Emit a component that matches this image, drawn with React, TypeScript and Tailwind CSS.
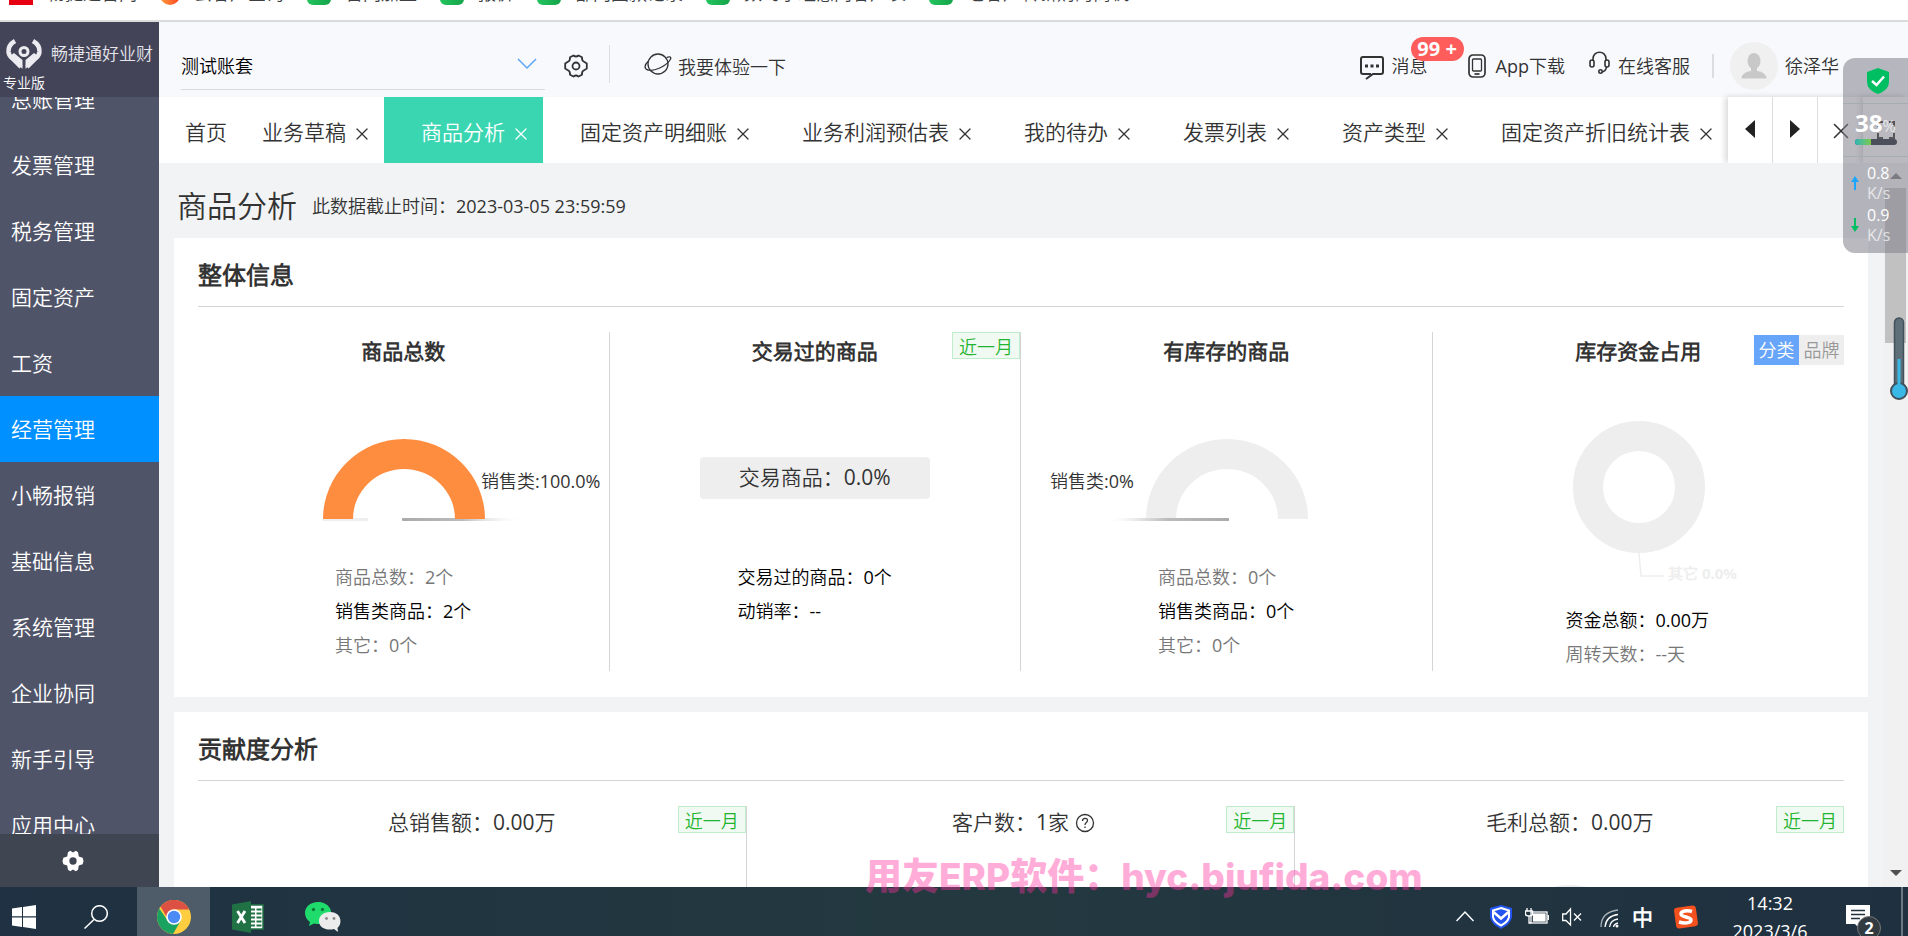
import React from 'react';
import { X } from 'lucide-react';

const bookmarks = [
  { label: '畅捷通官网', kind: 'red' },
  { label: '云客户查询', kind: 'orange' },
  { label: '官网加盟', kind: 'green' },
  { label: '报价', kind: 'green' },
  { label: '部门回款记录', kind: 'green' },
  { label: '数约小组意向客户表', kind: 'green' },
  { label: '老客户转新购的商机', kind: 'green' },
];

const bookmarkStyles: Record<string, string> = {
  red: 'w-6 bg-[#e60012]',
  orange: 'w-5 rounded-full bg-gradient-to-r from-[#ff9a3c] to-[#ff3b20]',
  green: 'w-6 rounded-md bg-gradient-to-r from-[#22c55e] to-[#16a34a]',
};

const menuItems = [
  '总账管理', '发票管理', '税务管理', '固定资产', '工资', '经营管理',
  '小畅报销', '基础信息', '系统管理', '企业协同', '新手引导', '应用中心',
];

const tabs = [
  '商品分析', '固定资产明细账', '业务利润预估表', '我的待办',
  '发票列表', '资产类型', '固定资产折旧统计表',
];

const GEAR_PATH =
  'M9.500 1.500 Q12 3.500 14.500 1.500 L18 3.300 Q17.600 7 20.500 8 L22.800 9.500 V14.500 L20.500 16 Q17.600 17 18 20.700 L14.500 22.500 Q12 20.500 9.500 22.500 L6 20.700 Q6.400 17 3.500 16 L1.200 14.500 V9.500 L3.500 8 Q6.400 7 6 3.300 Z';

// Six separate teeth, used for the solid gear
const SOLID_GEAR_PATH =
  'M6.500 2.500 L9 0.800 L12 2.600 L15 0.800 L17.500 2.500 L18.300 7 L22.500 8.500 L23.500 12 L22.500 15.500 L18.300 17 L17.500 21.500 L15 23.200 L12 21.400 L9 23.200 L6.500 21.500 L5.700 17 L1.500 15.500 L0.500 12 L1.500 8.500 L5.700 7 Z';

const BookmarkBar: React.FC = () => (
  <div className="flex h-[22px] shrink-0 items-end gap-[23px] overflow-hidden whitespace-nowrap border-b-2 border-[#dadcdc] bg-white pb-[15px] pl-[9px] text-lg leading-6 text-[#3c4043]">
    {bookmarks.map((b) => (
      <a key={b.label} href="#" className="flex h-6 shrink-0 items-center gap-[14px]">
        <span className={`h-6 shrink-0 ${bookmarkStyles[b.kind]}`} />
        {b.label}
      </a>
    ))}
  </div>
);

const Sidebar: React.FC = () => (
  <aside className="flex w-[159px] shrink-0 flex-col bg-[#505469] text-white">
    <div className="flex h-[75px] shrink-0 flex-col bg-[#444459] pt-[14px]">
      <div className="flex h-9 items-center gap-2 pl-[5px]">
        <svg width="38" height="30" viewBox="0 0 38 30" fill="none" stroke="#ececf0" className="shrink-0">
          <path d="M10 2 Q3 6 3.500 13 Q4 17 8 20 L16 28" strokeWidth="4.500" />
          <path d="M28 2 Q35 6 34.500 13 Q34 17 30 20 L22 28" strokeWidth="4.500" />
          <path d="M5 17 L17.500 30 V21 L9 14Z M33 17 L20.500 30 V21 L29 14Z" fill="#ececf0" stroke="none" />
          <circle cx="19" cy="12.500" r="4" strokeWidth="3" />
        </svg>
        <span className="whitespace-nowrap text-[17px] font-medium text-[#e4e4ea]">畅捷通好业财</span>
      </div>
      <span className="pl-[3px] text-sm leading-[22px]">专业版</span>
    </div>
    <nav className="min-h-0 flex-1 overflow-hidden">
      <div className="-mt-[31px]">
        {menuItems.map((item) => (
          <a
            key={item}
            href="#"
            className={`flex h-[66px] items-center pl-[11px] pt-px text-[21px] ${item === '经营管理' ? 'bg-[#0090ff]' : ''}`}
          >
            {item}
          </a>
        ))}
      </div>
    </nav>
    <button aria-label="设置" className="flex h-[53px] shrink-0 items-center justify-center bg-[#404552] pr-[14px]">
      <svg width="22" height="22" viewBox="0 0 24 24">
        <path d={SOLID_GEAR_PATH} fill="white" />
        <circle cx="12" cy="12" r="4" fill="#404552" />
      </svg>
    </button>
  </aside>
);

const Header: React.FC = () => (
  <header className="flex h-[75px] shrink-0 items-center bg-[#f8f9fd] pl-[22px] pr-[69px] text-lg text-[#333]">
    <div className="relative mt-3 flex h-12 w-[364px] items-center border-b border-[#d9dadd]">
      <select aria-label="账套" className="h-full w-full appearance-none bg-transparent pt-[2px] text-black outline-none">
        <option>测试账套</option>
      </select>
      <svg width="20" height="12" viewBox="0 0 20 12" className="pointer-events-none absolute right-2 top-4">
        <path d="M1 1 L10 10 L19 1" fill="none" stroke="#5fa3f5" strokeWidth="1.500" />
      </svg>
    </div>
    <button aria-label="账套设置" className="ml-[18px] mt-[12px]">
      <svg width="26" height="26" viewBox="-1 -1 26 26" fill="none" stroke="#333" strokeWidth="1.800" strokeLinejoin="round">
        <path d={GEAR_PATH} />
        <circle cx="12" cy="12" r="3.500" />
      </svg>
    </button>
    <span className="ml-5 mt-2 h-[38px] w-px bg-[#dcdde1]" />
    <a href="#" className="ml-[34px] mt-[14px] flex items-center gap-[6px]">
      <svg width="28" height="24" viewBox="0 0 28 24" fill="none" stroke="#333" strokeWidth="1.300" className="-mt-[6px]">
        <circle cx="14" cy="12" r="10" />
        <path d="M4.500 9 C0 13 0 17 4 18 C10 20 22 14 26 8 C28 5 26 4 22.500 5.500" />
      </svg>
      我要体验一下
    </a>
    <div className="ml-auto mt-[12px] flex items-center">
      <a href="#" className="relative flex items-center gap-2">
        <svg width="24" height="26" viewBox="0 0 24 26" fill="none" stroke="#333" strokeWidth="2" className="mt-1">
          <path d="M11 19 H3 Q1 19 1 17 V4 Q1 2 3 2 H21 Q23 2 23 4 V17 Q23 19 21 19 H13 L6 24" />
          <path d="M5 11 h3 M10.500 11 h3 M16 11 h3" strokeWidth="3" />
        </svg>
        消息
        <span className="absolute -top-[14px] left-[51px] flex h-6 w-[53px] items-center justify-center rounded-full bg-[#ff5c5c] text-xl font-bold text-white">
          99 +
        </span>
      </a>
      <a href="#" className="ml-10 flex items-center gap-[10px]">
        <svg width="18" height="24" viewBox="0 0 18 24" fill="none" stroke="#333" strokeWidth="1.700">
          <rect x="1" y="1" width="16" height="22" rx="4" />
          <rect x="4.500" y="5" width="9" height="12" rx="1" strokeWidth="1.300" />
          <path d="M6.500 20 h5" />
        </svg>
        App下载
      </a>
      <a href="#" className="ml-6 flex items-center gap-2">
        <svg width="21" height="24" viewBox="0 0 21 24" fill="none" stroke="#333" strokeWidth="1.600" className="-mt-[5px]">
          <path d="M4 10 V8 C4 -1 17 -1 17 8 V10" />
          <rect x="1" y="9" width="4" height="7" rx="2" />
          <rect x="16" y="9" width="4" height="7" rx="2" />
          <path d="M17.500 16 Q17 20 13 21" />
          <circle cx="11.500" cy="20.500" r="1.700" />
        </svg>
        在线客服
      </a>
      <span className="ml-[22px] h-6 w-[2px] bg-[#dcdde1]" />
      <span className="ml-4 flex size-12 items-center justify-center rounded-full bg-[#f0f0f0]">
        <svg width="26" height="26" viewBox="0 0 26 26" fill="#c8c8c8">
          <ellipse cx="13" cy="8" rx="6.500" ry="8" />
          <path d="M10 14 h6 v4 q9 1 9.500 7.500 h-25 Q1 19 10 18Z" />
        </svg>
      </span>
      <span className="ml-[7px]">徐泽华</span>
    </div>
  </header>
);

const TabBar: React.FC = () => (
  <div className="flex h-[66px] shrink-0 bg-white text-[21px] text-[#333]">
    <div className="flex min-w-0 flex-1 overflow-hidden whitespace-nowrap">
      <a href="#" className="flex shrink-0 items-center pl-[26px] pt-[5px]">首页</a>
      <div className="flex shrink-0 items-center gap-[6px] pl-[35px] pr-3 pt-[5px]">
        <a href="#">业务草稿</a>
        <button aria-label="关闭业务草稿" className="pt-[2px]"><X size={20} strokeWidth={1.5} /></button>
      </div>
      {tabs.map((tab, i) => (
        <div
          key={tab}
          className={`flex shrink-0 items-center gap-[6px] pl-[37px] pr-3 pt-[5px] ${i === 0 ? 'bg-[#3ad6b2] text-white' : ''}`}
        >
          <a href="#">{tab}</a>
          <button aria-label={`关闭${tab}`} className="pt-[2px]"><X size={20} strokeWidth={1.5} /></button>
        </div>
      ))}
    </div>
    <div className="flex shrink-0 bg-white shadow-[-3px_0_6px_rgba(0,0,0,0.15)]">
      <button aria-label="向左" className="flex w-[45px] items-center justify-center border-r border-[#dcdcdc] pb-[2px]">
        <svg width="10" height="18" viewBox="0 0 10 18"><path d="M10 0 V18 L0 9Z" fill="#222" /></svg>
      </button>
      <button aria-label="向右" className="flex w-[45px] items-center justify-center border-r border-[#dcdcdc] pb-[2px]">
        <svg width="10" height="18" viewBox="0 0 10 18"><path d="M0 0 V18 L10 9Z" fill="#222" /></svg>
      </button>
      <button aria-label="关闭全部" className="flex w-[45px] items-center justify-center pt-[2px]">
        <X size={26} strokeWidth={1.5} />
      </button>
      <button aria-label="全屏" className="flex w-[45px] items-center justify-center shadow-[-3px_0_6px_rgba(0,0,0,0.15)]">
        <svg width="18" height="18" viewBox="0 0 18 18" fill="none" stroke="#222" strokeWidth="2">
          <path d="M1 6 V1 H6 M12 1 H17 V6 M17 12 V17 H12 M6 17 H1 V12" />
        </svg>
      </button>
    </div>
  </div>
);

const MonthBadge: React.FC = () => (
  <button className="absolute right-0 top-0 flex h-[27px] w-[68px] items-center justify-center border border-[#bfecca] bg-[#f1f9f3] pt-[3px] text-lg text-[#1fb52f]">
    近一月
  </button>
);

interface StatLine {
  text: string;
  muted?: boolean;
}

const StatList: React.FC<{ lines: StatLine[]; className?: string }> = ({ lines, className = 'pl-[137px]' }) => (
  <ul className={`text-lg leading-[34px] ${className}`}>
    {lines.map((line) => (
      <li key={line.text} className={line.muted ? 'text-[#777]' : 'text-black'}>{line.text}</li>
    ))}
  </ul>
);

const ColumnTitle: React.FC<{ children: React.ReactNode }> = ({ children }) => (
  <h3 className="h-9 pt-[3px] text-center text-[21px] font-bold leading-8 text-[#333]">{children}</h3>
);

interface GaugeProps {
  color: string;
  label: string;
  full?: boolean;
}

// Half ring with a pointer; the pointer lies to the right when the share is full
const Gauge: React.FC<GaugeProps> = ({ color, label, full }) => (
  <svg width="412" height="192" viewBox="0 0 412 192" className="mx-auto block overflow-visible">
    <defs>
      <linearGradient id={full ? 'needleRight' : 'needleLeft'} x1={full ? '0' : '1'} x2={full ? '1' : '0'}>
        <stop offset="0" stopColor="#aaa" />
        <stop offset="0.500" stopColor="#bbb" />
        <stop offset="1" stopColor="#fff" stopOpacity="0" />
      </linearGradient>
    </defs>
    <rect x={full ? 204 : 87} y="150" width="121" height="3" rx="1" fill={`url(#${full ? 'needleRight' : 'needleLeft'})`} />
    {full && <rect x="125" y="150" width="45" height="3" fill="#eee" />}
    <path d="M125 151 A81 80 0 0 1 287 151 H257 A51 50 0 0 0 155 151Z" fill={color} />
    {!full && <rect x="87" y="150" width="121" height="3" rx="1" fill="url(#needleLeft)" />}
    <text x={full ? 283 : 29} y="120" fontSize="18" fill="#333">{label}</text>
  </svg>
);

const Card: React.FC<{ title: string; children: React.ReactNode }> = ({ title, children }) => (
  <section className="bg-white px-6 pb-[26px]">
    <h2 className="mb-[25px] flex h-[69px] items-center border-b border-[#d4d5d7] pt-[6px] text-2xl font-bold text-[#333]">{title}</h2>
    {children}
  </section>
);

const Overview: React.FC = () => (
  <Card title="整体信息">
    <div className="grid h-[339px] grid-cols-4 divide-x divide-[#d4d5d7]">
      <div>
        <ColumnTitle>商品总数</ColumnTitle>
        <Gauge color="#ff8d40" label="销售类:100.0%" full />
        <StatList lines={[{ text: '商品总数：2个', muted: true }, { text: '销售类商品：2个' }, { text: '其它：0个', muted: true }]} />
      </div>
      <div className="relative">
        <ColumnTitle>交易过的商品</ColumnTitle>
        <MonthBadge />
        <div className="flex h-48 items-center justify-center pt-[28px]">
          <span className="flex h-[42px] w-[230px] items-center justify-center rounded bg-[#eee] text-[21px] text-[#333]">
            交易商品：0.0%
          </span>
        </div>
        <StatList className="pl-32" lines={[{ text: '交易过的商品：0个' }, { text: '动销率：--' }]} />
      </div>
      <div>
        <ColumnTitle>有库存的商品</ColumnTitle>
        <Gauge color="#eee" label="销售类:0%" />
        <StatList lines={[{ text: '商品总数：0个', muted: true }, { text: '销售类商品：0个' }, { text: '其它：0个', muted: true }]} />
      </div>
      <div className="relative">
        <ColumnTitle>库存资金占用</ColumnTitle>
        <div className="absolute right-0 top-[3px] flex text-lg">
          <button className="h-[30px] w-[45px] bg-[#66a5f9] text-white">分类</button>
          <button className="h-[30px] w-[45px] bg-[#eee] text-[#999]">品牌</button>
        </div>
        <svg width="412" height="235" viewBox="0 0 412 235" className="mx-auto block" fill="none" stroke="#eee">
          <circle cx="206" cy="119" r="51" strokeWidth="30" />
          <path d="M206 185 L208 208 H231" strokeWidth="1.500" />
          <text x="235" y="211" fontSize="15" fontWeight="700" fill="#eee" stroke="none">其它 0.0%</text>
        </svg>
        <StatList className="pl-[133px]" lines={[{ text: '资金总额：0.00万' }, { text: '周转天数：--天', muted: true }]} />
      </div>
    </div>
  </Card>
);

const Contribution: React.FC = () => (
  <Card title="贡献度分析">
    <div className="grid h-[339px] grid-cols-3 divide-x divide-[#d4d5d7] text-[21px] leading-8 text-[#333]">
      <div className="relative text-center">
        总销售额：0.00万
        <MonthBadge />
      </div>
      <div className="relative flex h-full justify-center gap-[6px] pl-[6px]">
        客户数：1家
        <svg width="20" height="32" viewBox="0 0 20 32" fill="none" stroke="#333" strokeWidth="1.300">
          <circle cx="10" cy="17" r="8.500" />
          <path d="M7.500 15 C7.500 11.500 12.500 11.500 12.500 14.500 C12.500 16.500 10 16.500 10 19 M10 20.500 V22" />
        </svg>
        <MonthBadge />
      </div>
      <div className="relative text-center">
        毛利总额：0.00万
        <MonthBadge />
        <svg width="160" height="160" viewBox="0 0 160 160" className="mx-auto mt-[47px] block" fill="none" stroke="#eee">
          <circle cx="80" cy="80" r="65" strokeWidth="30" />
        </svg>
      </div>
    </div>
  </Card>
);

const ScrollBar: React.FC = () => (
  <div className="flex w-[25px] shrink-0 flex-col items-center bg-[#f1f1f1] py-[10px]">
    <svg width="12" height="7" viewBox="0 0 12 7"><path d="M0 6 L6 0 L12 6Z" fill="#777" /></svg>
    <div className="mt-2 h-[155px] w-[21px] bg-[#c1c1c1]" />
    <svg width="12" height="7" viewBox="0 0 12 7" className="mt-auto"><path d="M0 0 L6 6 L12 0Z" fill="#505050" /></svg>
  </div>
);

const speeds = [
  { value: '0.8', color: '#1ba6ff', d: 'M4 0 L8 6 H5 V14 H3 V6 H0Z' },
  { value: '0.9', color: '#00bf63', d: 'M4 14 L8 8 H5 V0 H3 V8 H0Z' },
];

const SpeedWidget: React.FC = () => (
  <div className="absolute right-0 top-[58px] h-[195px] w-[65px] rounded-l-xl bg-[#80808a]/55 text-white">
    <div className="flex h-[46px] items-center justify-center border-b border-[#a3adb2] pl-1">
      <svg width="22" height="26" viewBox="0 0 22 26">
        <path d="M11 0 L22 4 V14 Q22 22 11 26 Q0 22 0 14 V4Z" fill="#00bf63" />
        <path d="M5 13 L9.500 17 L17 8.500" fill="none" stroke="white" strokeWidth="2.500" />
      </svg>
    </div>
    <div className="flex h-[53px] flex-col border-b border-[#a3adb2] pl-3 pt-[6px]">
      <div className="flex items-end text-2xl font-bold leading-[26px]">
        38<span className="text-base font-normal leading-5 text-white/70">%</span>
      </div>
      <div className="mt-[3px] h-[6px] w-[42px] overflow-hidden rounded-full bg-[#4b4f5c]">
        <div className="h-full w-[38%] bg-gradient-to-r from-[#2bb5b5] to-[#7ac943]" />
      </div>
    </div>
    <div className="flex flex-col gap-[2px] pl-2 pt-[6px] text-base leading-5">
      {speeds.map((s) => (
        <div key={s.value} className="flex items-center gap-2">
          <svg width="8" height="14" viewBox="0 0 8 14"><path d={s.d} fill={s.color} /></svg>
          <span>{s.value}<br /><span className="text-white/70">K/s</span></span>
        </div>
      ))}
    </div>
  </div>
);

const Thermometer: React.FC = () => (
  <svg width="18" height="84" viewBox="0 0 18 84" className="absolute right-0 top-[317px]">
    <rect x="4.500" y="1" width="9" height="72" rx="4.500" fill="#5f6f7a" stroke="#42505a" strokeWidth="1.500" />
    <circle cx="9" cy="74" r="8" fill="#3ab8e6" stroke="#42505a" strokeWidth="2" />
    <rect x="7.500" y="42" width="3" height="30" fill="#3ab8e6" />
  </svg>
);

const Taskbar: React.FC = () => (
  <footer className="flex h-[49px] shrink-0 overflow-hidden bg-gradient-to-r from-[#1f3142] via-[#23393f] to-[#1f3040] text-white">
    <button aria-label="开始" className="flex w-12 items-start justify-center pt-[18px]">
      <svg width="24" height="24" viewBox="0 0 24 24" fill="white">
        <path d="M0 3.400 L10 2 V11.300 H0Z M11 1.900 L24 0 V11.300 H11Z M0 12.500 H10 V22 L0 20.600Z M11 12.500 H24 V24 L11 22.100Z" />
      </svg>
    </button>
    <button aria-label="搜索" className="flex w-[89px] items-start pl-9 pt-[18px]">
      <svg width="24" height="24" viewBox="0 0 24 24" fill="none" stroke="white" strokeWidth="1.500">
        <circle cx="15.500" cy="8.500" r="7.800" />
        <path d="M10 14.500 L0.500 23.500" />
      </svg>
    </button>
    <button aria-label="Chrome" className="flex w-[73px] items-start justify-center bg-[#4d5c68] pt-[13px]">
      <svg width="34" height="34" viewBox="0 0 34 34">
        <circle cx="17" cy="17" r="17" fill="#ffcd40" />
        <path d="M2.300 8.500 A17 17 0 0 0 16 34 L23.500 21 L17 17 L10.500 20.500Z" fill="#1aa260" />
        <path d="M3.500 6.500 A17 17 0 0 1 32.300 9.500 H17 L10.500 18.500Z" fill="#dd5144" />
        <circle cx="17" cy="17" r="7.800" fill="white" />
        <circle cx="17" cy="17" r="6.200" fill="#4c8bf5" />
      </svg>
    </button>
    <button aria-label="Excel" className="flex w-[76px] items-start justify-center pt-[14px]">
      <svg width="32" height="32" viewBox="0 0 32 32">
        <rect x="17" y="4" width="14" height="24" fill="white" stroke="#207245" strokeWidth="1.500" />
        <path d="M19 8.500 h4 M24.500 8.500 h5 M19 12.500 h4 M24.500 12.500 h5 M19 16.500 h4 M24.500 16.500 h5 M19 20.500 h4 M24.500 20.500 h5 M19 24.500 h4 M24.500 24.500 h5" stroke="#207245" strokeWidth="2" />
        <path d="M0 3.500 L19 0 V32 L0 28.500Z" fill="#207245" />
        <path d="M5.500 10 L13 22 M13 10 L5.500 22" stroke="white" strokeWidth="2.800" />
      </svg>
    </button>
    <button aria-label="微信" className="flex w-[74px] items-start justify-center pt-[15px]">
      <svg width="36" height="30" viewBox="0 0 36 30">
        <path d="M13 0 C5 0 0 5 0 11 C0 15 2 18 5 20 L4 24 L9 21.500 Q20 24 25 16 C29 7 22 0 13 0Z" fill="#1fdb6b" />
        <circle cx="8.500" cy="7.500" r="1.700" fill="#0d7a3a" />
        <circle cx="17.500" cy="7.500" r="1.700" fill="#0d7a3a" />
        <path d="M25 10 C18 10 14 14 14 19 C14 26 22 29 29 27 L33 30 L32.500 26 C38 21 36 10 25 10Z" fill="#ececec" />
        <circle cx="21.500" cy="16.500" r="1.400" fill="#8a8a8a" />
        <circle cx="29" cy="16.500" r="1.400" fill="#8a8a8a" />
      </svg>
    </button>
    <div className="ml-auto flex items-start pt-[18px]">
      <svg width="18" height="24" viewBox="0 0 18 24" fill="none" stroke="white" strokeWidth="1.500"><path d="M0.500 16 L9 7 L17.500 16" /></svg>
      <svg width="22" height="24" viewBox="0 0 22 24" className="ml-4">
        <path d="M11 0 L22 3 V12 Q21 19 11 24 Q1 19 0 12 V3Z" fill="#2554f0" />
        <path d="M11 3 L19 5.500 V12 Q18 17 11 20.500 Q4 17 3 12 V5.500Z" fill="none" stroke="white" strokeWidth="2" />
        <path d="M3.500 7 L11 13.500 L18.500 7" fill="none" stroke="white" strokeWidth="2.500" />
      </svg>
      <svg width="24" height="24" viewBox="0 0 24 24" fill="none" stroke="white" strokeWidth="1.300" className="ml-[13px]">
        <path d="M2 3 V6 M6 3 V6 M0.500 6 H7.500 V9 Q7.500 11 4 11 Q0.500 11 0.500 9Z M4 11 V18 H6" />
        <rect x="6" y="7" width="16" height="11" />
        <rect x="8.500" y="9" width="11.500" height="7" fill="white" />
        <path d="M23.300 10 V15" />
      </svg>
      <svg width="20" height="24" viewBox="0 0 20 24" fill="none" stroke="white" strokeWidth="1.300" className="ml-[13px]">
        <path d="M0.700 9 H4 L8.500 4 V20 L4 15.500 H0.700Z M12 8.500 L19 15.500 M19 8.500 L12 15.500" />
      </svg>
      <svg width="20" height="24" viewBox="0 0 20 24" fill="none" stroke="white" strokeWidth="1.300" className="ml-[18px]">
        <path d="M1 22 Q1 7 18 5" stroke="#aab2b8" />
        <path d="M5 22 Q6 11 18 9.500 M9.500 22 Q10.500 15 18 14 M13.500 22 Q14 19 18 18" />
        <circle cx="17" cy="21" r="1.500" fill="white" stroke="none" />
      </svg>
      <span className="ml-3 text-[21px] font-bold leading-6">中</span>
      <svg width="24" height="24" viewBox="0 0 24 24" className="ml-[21px]">
        <rect x="1" y="1.500" width="22" height="21" rx="3" fill="#f4511e" transform="rotate(-8 12 12)" />
        <path d="M18 6.500 C13 5 7 6 7 9 C7 12.500 17 11.500 17 15 C17 18.500 10 18.500 5 17" fill="none" stroke="white" strokeWidth="3.500" />
      </svg>
      <div className="-mt-4 ml-[31px] w-[82px] whitespace-nowrap text-center text-lg leading-7">
        14:32
        <br />
        2023/3/6
      </div>
      <div className="relative ml-[35px] mr-[31px]">
        <svg width="24" height="26" viewBox="0 0 24 26">
          <path d="M0 0 H24 V19 H15 V25 L9 19 H0Z" fill="white" />
          <path d="M5 5.500 H19 M5 9.500 H19 M5 13.500 H14" stroke="#20333f" strokeWidth="1.300" />
        </svg>
        <span className="absolute left-[11px] top-[11px] flex size-6 items-center justify-center rounded-full border border-[#777] bg-[#333b42] text-base font-bold">2</span>
      </div>
    </div>
    <div className="w-[7px] border-l-2 border-[#6b7880]" />
  </footer>
);

const App: React.FC = () => {
  return (
    <div className="relative flex h-screen flex-col overflow-hidden bg-white font-['Open_Sans','Noto_Sans_CJK_SC_DemiLight','Noto_Sans_CJK_SC',sans-serif]">
      <BookmarkBar />
      <div className="flex min-h-0 flex-1">
        <Sidebar />
        <div className="flex min-w-0 flex-1 flex-col">
          <Header />
          <TabBar />
          <div className="flex min-h-0 flex-1">
            <main className="min-w-0 flex-1 overflow-hidden bg-[#f2f3f5] px-[15px]">
              <div className="flex h-[75px] items-center gap-[15px] pl-[3px] pt-[11px] text-[#333]">
                <h1 className="text-3xl">商品分析</h1>
                <span className="text-lg">此数据截止时间：2023-03-05 23:59:59</span>
              </div>
              <div className="flex flex-col gap-[15px]">
                <Overview />
                <Contribution />
              </div>
            </main>
            <ScrollBar />
          </div>
        </div>
      </div>
      <Taskbar />
      <SpeedWidget />
      <Thermometer />
      <div className="pointer-events-none absolute bottom-8 left-[865px] whitespace-nowrap font-['Inter','Noto_Sans_CJK_SC',sans-serif] text-[37px] font-extrabold text-[#ff309d]/40">
        用友ERP软件：hyc.bjufida.com
      </div>
    </div>
  );
};

export default App;
